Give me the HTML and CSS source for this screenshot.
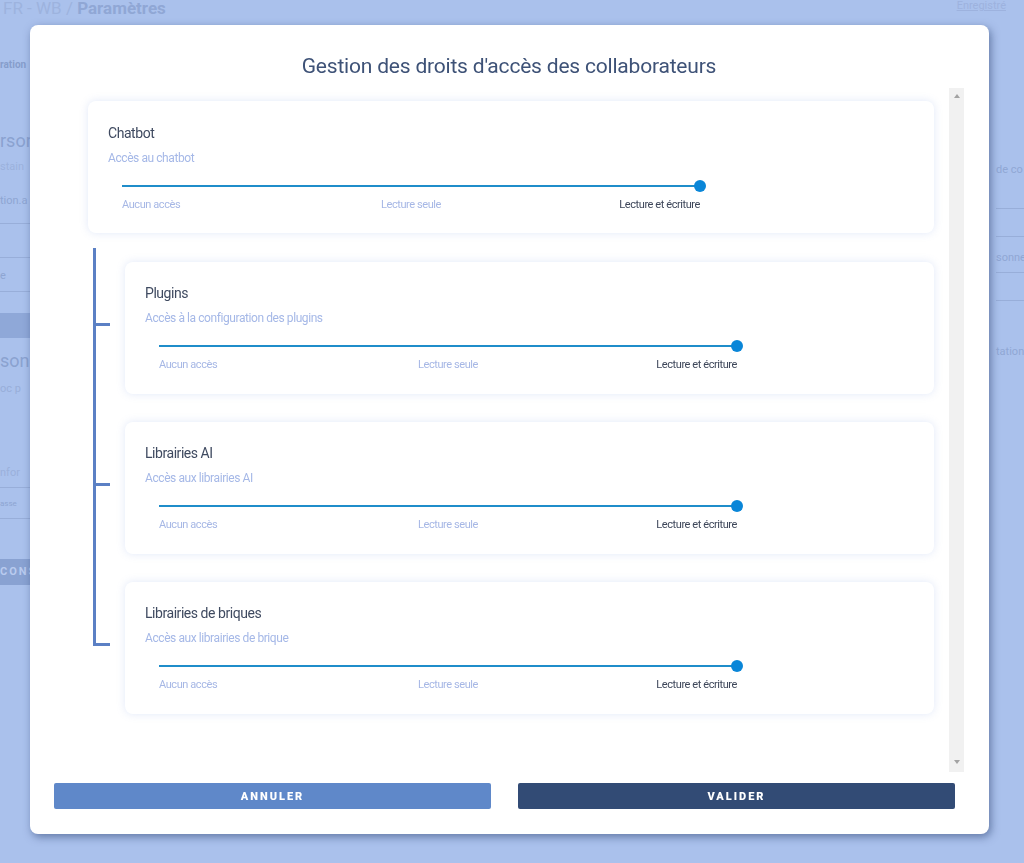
FILE: index.html
```html
<!DOCTYPE html>
<html lang="fr">
<head>
<meta charset="utf-8">
<title>Paramètres</title>
<link rel="stylesheet" href="styles.css">
</head>
<body>
<div class="page">
  <header class="topbar">
    <span class="crumb"><span class="crumb-light">FR - WB / </span><b>Paramètres</b></span>
    <span class="saved">Enregistré</span>
  </header>
  <div class="bg-main">
    <div class="bg-left">
      <div class="bg-tab">ration</div>
      <div class="bg-h bg-h1">rson</div>
      <div class="bg-t bg-t1">stain</div>
      <div class="bg-t bg-t2">tion.a</div>
      <div class="bg-line bg-l1"></div>
      <div class="bg-line bg-l2"></div>
      <div class="bg-t bg-t3">e</div>
      <div class="bg-line bg-l3"></div>
      <div class="bg-band bg-b1"></div>
      <div class="bg-h bg-h2">sonn</div>
      <div class="bg-t bg-t4">oc p</div>
      <div class="bg-t bg-t5">nfor</div>
      <div class="bg-line bg-l4"></div>
      <div class="bg-t bg-t6">asse</div>
      <div class="bg-line bg-l5"></div>
      <div class="bg-band bg-b2">CONS</div>
    </div>
    <div class="bg-right">
      <div class="bg-t bg-r1">de co</div>
      <div class="bg-line bg-rl1"></div>
      <div class="bg-line bg-rl2"></div>
      <div class="bg-t bg-r2">sonne</div>
      <div class="bg-line bg-rl3"></div>
      <div class="bg-line bg-rl4"></div>
      <div class="bg-t bg-r3">tation</div>
    </div>
  </div>
</div>

<div class="overlay">
  <div class="modal">
    <h1 class="modal-title">Gestion des droits d'accès des collaborateurs</h1>
    <div class="modal-body">
      <div class="scroll-content">
        <section class="card">
          <h2 class="card-title">Chatbot</h2>
          <p class="card-sub">Accès au chatbot</p>
          <div class="slider">
            <div class="track"><span class="line"></span><span class="knob"></span></div>
            <div class="ticks"><span>Aucun accès</span><span class="mid">Lecture seule</span><span class="end active">Lecture et écriture</span></div>
          </div>
        </section>
        <div class="children">
          <section class="card child">
            <h2 class="card-title">Plugins</h2>
            <p class="card-sub">Accès à la configuration des plugins</p>
            <div class="slider">
              <div class="track"><span class="line"></span><span class="knob"></span></div>
              <div class="ticks"><span>Aucun accès</span><span class="mid">Lecture seule</span><span class="end active">Lecture et écriture</span></div>
            </div>
          </section>
          <section class="card child">
            <h2 class="card-title">Librairies AI</h2>
            <p class="card-sub">Accès aux librairies AI</p>
            <div class="slider">
              <div class="track"><span class="line"></span><span class="knob"></span></div>
              <div class="ticks"><span>Aucun accès</span><span class="mid">Lecture seule</span><span class="end active">Lecture et écriture</span></div>
            </div>
          </section>
          <section class="card child">
            <h2 class="card-title">Librairies de briques</h2>
            <p class="card-sub">Accès aux librairies de brique</p>
            <div class="slider">
              <div class="track"><span class="line"></span><span class="knob"></span></div>
              <div class="ticks"><span>Aucun accès</span><span class="mid">Lecture seule</span><span class="end active">Lecture et écriture</span></div>
            </div>
          </section>
        </div>
      </div>
      <div class="scrollbar"><span class="arrow-up"></span><span class="arrow-down"></span></div>
    </div>
    <div class="modal-footer">
      <button class="btn btn-cancel">ANNULER</button>
      <button class="btn btn-ok">VALIDER</button>
    </div>
  </div>
</div>
</body>
</html>
```

FILE: styles.css
```css
* { box-sizing: border-box; }
html, body { margin: 0; padding: 0; }
body {
  width: 1024px;
  height: 863px;
  overflow: hidden;
  background: #aac1ec;
  font-family: Roboto, "Liberation Sans", sans-serif;
}

/* ---------- background page ---------- */
.page { height: 863px; }
.topbar {
  height: 20px;
  display: flex;
  justify-content: space-between;
  align-items: flex-start;
  padding: 0 18px 0 3px;
}
.crumb {
  font-size: 17px;
  line-height: 17px;
  color: #95acd8;
  margin-top: 0;
}
.crumb-light { color: #9db3de; }
.crumb b { font-weight: 700; color: #90a7d5; }
.saved {
  font-size: 11px;
  line-height: 12px;
  color: #9db2de;
  text-decoration: underline;
  margin-top: 0;
}
.bg-main { display: flex; justify-content: space-between; }
.bg-left { width: 30px; overflow: hidden; white-space: nowrap; color: #8ea5d2; }
.bg-right { width: 35px; overflow: hidden; white-space: nowrap; padding-left: 7px; color: #90a7d4; }
.bg-t { font-size: 11px; line-height: 14px; height: 14px; }
.bg-h { font-size: 18px; line-height: 22px; height: 22px; color: #8aa2d0; }
.bg-tab { font-size: 10px; line-height: 14px; height: 14px; font-weight: 700; margin-top: 38px; color: #869dcb; }
.bg-line { height: 1px; background: #98aed9; }
.bg-band { height: 25px; background: #8fa8d8; }
.bg-h1 { margin-top: 58px; }
.bg-t1 { margin-top: 8px; color: #9bb1dc; }
.bg-t2 { margin-top: 20px; }
.bg-l1 { margin-top: 15px; }
.bg-l2 { margin-top: 33px; }
.bg-t3 { margin-top: 11px; }
.bg-l3 { margin-top: 8px; }
.bg-b1 { margin-top: 21px; }
.bg-h2 { margin-top: 12px; }
.bg-t4 { margin-top: 10px; color: #98aed9; }
.bg-t5 { margin-top: 70px; color: #9ab0db; }
.bg-l4 { margin-top: 7px; }
.bg-t6 { margin-top: 9px; font-size: 8px; }
.bg-l5 { margin-top: 7px; }
.bg-b2 {
  margin-top: 40px;
  height: 26px;
  background: #89a2d2;
  color: #b9cbef;
  font-size: 11px;
  font-weight: 700;
  letter-spacing: 2px;
  line-height: 26px;
}
.bg-r1 { margin-top: 143px; }
.bg-rl1 { margin-top: 31px; }
.bg-rl2 { margin-top: 27px; }
.bg-r2 { margin-top: 14px; }
.bg-rl3 { margin-top: 7px; }
.bg-rl4 { margin-top: 27px; }
.bg-r3 { margin-top: 44px; }

/* ---------- modal ---------- */
.overlay {
  position: fixed;
  inset: 0;
  padding: 25px 35px 29px 30px;
}
.modal {
  height: 809px;
  background: #ffffff;
  border-radius: 8px;
  box-shadow: 2px 3px 8px rgba(40, 62, 110, 0.55);
  padding: 28px 25px 25px 24px;
  display: flex;
  flex-direction: column;
}
.modal-title {
  margin: 0;
  text-align: center;
  font-size: 21px;
  line-height: 26px;
  font-weight: 400;
  color: #3e5277;
  letter-spacing: -0.2px;
}
.modal-body {
  margin-top: 9px;
  height: 684px;
  display: flex;
}
.scroll-content {
  flex: 1;
  padding: 13px 15px 0 34px;
  overflow: hidden;
}
.scrollbar {
  width: 15px;
  background: #f1f1f1;
  display: flex;
  flex-direction: column;
  justify-content: space-between;
  align-items: center;
  padding: 6px 0 8px;
}
.arrow-up {
  width: 0; height: 0;
  border-left: 3.5px solid transparent;
  border-right: 3.5px solid transparent;
  border-bottom: 4px solid #a3a3a3;
}
.arrow-down {
  width: 0; height: 0;
  border-left: 3.5px solid transparent;
  border-right: 3.5px solid transparent;
  border-top: 4px solid #a3a3a3;
}

.card {
  background: #fff;
  border-radius: 8px;
  box-shadow: 0 0 9px rgba(120, 150, 225, 0.22);
  padding: 23px 20px 0;
  height: 132px;
}
.card-title {
  margin: 0;
  font-size: 14px;
  line-height: 18px;
  font-weight: 400;
  color: #3f4a60;
  letter-spacing: -0.45px;
}
.card-sub {
  margin: 7px 0 0;
  font-size: 12px;
  line-height: 18px;
  color: #a5b8e7;
  letter-spacing: -0.42px;
}
.slider {
  width: 578px;
  margin: 13px 0 0 14px;
}
.track {
  height: 12px;
  display: flex;
  align-items: center;
}
.line {
  flex: 1;
  height: 2px;
  background: #1f8dca;
}
.knob {
  width: 12px;
  height: 12px;
  border-radius: 50%;
  background: #0a86d8;
  margin: 0 -6px;
}
.ticks {
  margin-top: 6px;
  display: grid;
  grid-template-columns: 1fr 1fr 1fr;
  font-size: 11px;
  line-height: 14px;
  color: #a6b7e5;
  white-space: nowrap;
  letter-spacing: -0.42px;
}
.ticks .mid { text-align: center; }
.ticks .end { text-align: right; }
.ticks .active { color: #3d4659; }

.children {
  position: relative;
  margin-top: 29px;
  padding-left: 37px;
  display: flex;
  flex-direction: column;
  gap: 28px;
}
.children::before {
  content: "";
  position: absolute;
  left: 5px;
  top: -14px;
  bottom: 68px;
  width: 3px;
  background: #5b80c4;
}
.child { position: relative; padding-top: 22px; }
.child::before {
  content: "";
  position: absolute;
  left: -31px;
  top: 61px;
  width: 16px;
  height: 3px;
  background: #5b80c4;
}

.modal-footer {
  margin-top: 11px;
  padding-right: 9px;
  display: flex;
  gap: 27px;
}
.btn {
  flex: 1;
  height: 26px;
  border: 0;
  border-radius: 2px;
  color: #fff;
  font-family: Roboto, "Liberation Sans", sans-serif;
  font-size: 11px;
  font-weight: 900;
  letter-spacing: 2px;
  padding: 0;
}
.btn-cancel { background: #5f88c9; }
.btn-ok { background: #324b75; }
```
